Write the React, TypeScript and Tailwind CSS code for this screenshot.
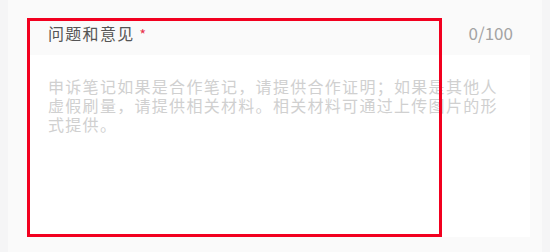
import { useState } from 'react';

const PLACEHOLDER =
  '申诉笔记如果是合作笔记，请提供合作证明；如果是其他人虚假刷量，请提供相关材料。相关材料可通过上传图片的形式提供。';

export default function App() {
  const [value, setValue] = useState('');

  return (
    <div
      className="relative w-[550px] h-[252px] overflow-hidden bg-[#f5f5f6]"
      style={{ fontFamily: '"Noto Sans CJK SC", "Noto Sans", sans-serif' }}
    >
      <div className="mx-[8px] h-full bg-[#fafafa] pt-[22px]">
        <div className="flex h-[22px] items-center justify-between pl-[40px] pr-[29px]">
          <span className="text-[16px] leading-[22px] tracking-[1.3px] text-[#555]">
            问题和意见
            <span className="ml-[5px] text-[14px] text-[#e8304a]">*</span>
          </span>
          <span className="text-[17px] leading-[22px] text-[#a3a3a3]">{value.length}/100</span>
        </div>
        <textarea
          value={value}
          maxLength={100}
          onChange={(e) => setValue(e.target.value)}
          placeholder={PLACEHOLDER}
          className="mt-[11px] ml-[20px] block h-[182px] w-[502px] resize-none bg-white px-[20px] pt-[22px] text-[16px] leading-[19px] tracking-[1.3px] text-[#333] outline-none placeholder:text-[#d0d0d0]"
        />
      </div>
      {/* red annotation box */}
      <div className="pointer-events-none absolute left-[27px] top-[18px] h-[219px] w-[415px] border-[3px] border-[#f2001f]" />
    </div>
  );
}
